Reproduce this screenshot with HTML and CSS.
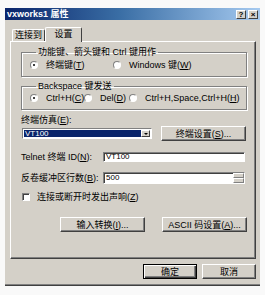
FILE: index.html
```html
<!DOCTYPE html>
<html lang="zh-CN">
<head>
  <meta charset="UTF-8">
  <title>vxworks1 属性</title>
  <link rel="stylesheet" href="styles.css">
</head>
<body>

  <div class="dialog">
    <div class="titlebar">
      <span class="title">vxworks1 属性</span>
      <span class="caption">
        <span class="cap-btn">?</span>
        <span class="cap-btn">×</span>
      </span>
    </div>

    <div class="body">
      <div class="tabs">
        <span class="tab">连接到</span>
        <span class="tab active">设置</span>
      </div>

      <div class="panel">
        <fieldset class="group first">
          <legend>功能键、箭头键和 Ctrl 键用作</legend>
          <div class="radios">
            <label class="radio w83"><span class="dot on"></span><span>终端键(<u>T</u>)</span></label>
            <label class="radio"><span class="dot"></span><span>Windows 键(<u>W</u>)</span></label>
          </div>
        </fieldset>

        <fieldset class="group second">
          <legend>Backspace 键发送</legend>
          <div class="radios">
            <label class="radio w54"><span class="dot on"></span><span>Ctrl+H(<u>C</u>)</span></label>
            <label class="radio w45"><span class="dot"></span><span>Del(<u>D</u>)</span></label>
            <label class="radio"><span class="dot"></span><span>Ctrl+H,Space,Ctrl+H(<u>H</u>)</span></label>
          </div>
        </fieldset>

        <div class="label-row">终端仿真(<u>E</u>):</div>
        <div class="combo-row">
          <div class="combo">
            <span class="combo-value">VT100</span>
            <span class="combo-arrow"></span>
          </div>
          <button class="btn wide">终端设置(<u>S</u>)...</button>
        </div>

        <div class="field-row telnet">
          <span class="field-label">Telnet 终端 ID(<u>N</u>):</span>
          <span class="field"><span>VT100</span></span>
        </div>

        <div class="field-row buffer">
          <span class="field-label">反卷缓冲区行数(<u>B</u>):</span>
          <span class="field tall"><span>500</span><span class="spin"><i></i><i></i></span></span>
        </div>

        <label class="check-row"><span class="box"></span><span>连接或断开时发出声响(<u>Z</u>)</span></label>

        <div class="btn-row">
          <button class="btn wide">输入转换(<u>I</u>)...</button>
          <button class="btn wide">ASCII 码设置(<u>A</u>)...</button>
        </div>
      </div>

      <div class="footer">
        <button class="btn small default">确定</button>
        <button class="btn small">取消</button>
      </div>
    </div>
  </div>

</body>
</html>
```

FILE: styles.css
```css
body {
  margin: 0;
  background: #f9f9f9;
  font-family: "Liberation Sans", "Noto Sans CJK SC", sans-serif;
  font-size: 9px;
  line-height: 10px;
  color: #000;
}
.dialog {
  margin: 8px 0 0 5px;
  width: 255px;
  height: 278px;
  box-sizing: border-box;
  background: #d4d0c8;
  border-bottom: 1px solid #404040;
  box-shadow: inset 0 -1px #808080;
}
.titlebar {
  height: 12px;
  display: flex;
  align-items: center;
  justify-content: space-between;
  padding: 0 2px 0 2px;
  background: linear-gradient(to right, #0a246a, #3a6ea5 45%, #a6caf0);
  color: #fff;
  font-weight: bold;
}
.caption {
  display: flex;
  gap: 2px;
}
.cap-btn {
  width: 10px;
  height: 9px;
  box-sizing: border-box;
  background: #d4d0c8;
  border: 1px solid;
  border-color: #fff #404040 #404040 #fff;
  color: #000;
  font-size: 8px;
  line-height: 7px;
  text-align: center;
}
.body {
  padding: 7px 4px 0 5px;
}
.tabs {
  display: flex;
  align-items: flex-end;
  height: 14px;
  padding-left: 2px;
}
.tab {
  width: 33px;
  height: 12px;
  box-sizing: border-box;
  border: 1px solid;
  border-bottom: none;
  border-color: #fff #404040 #404040 #fff;
  border-radius: 2px 2px 0 0;
  text-align: center;
  line-height: 11px;
  background: #d4d0c8;
}
.tab.active {
  width: 37px;
  height: 15px;
  margin-bottom: -1px;
  position: relative;
  z-index: 1;
  line-height: 12px;
}
.panel {
  height: 218px;
  box-sizing: border-box;
  border: 1px solid;
  border-color: #fff #404040 #404040 #fff;
  box-shadow: inset -1px -1px #808080;
  padding: 5px 8px 0 10px;
}
.group {
  margin: 0;
  border: 1px solid #808080;
  box-shadow: inset 1px 1px #fff, 1px 1px #fff;
  padding: 3px 0 6px 8px;
}
.group legend {
  padding: 0 2px;
  margin-left: 6px;
}
.group.second {
  margin-top: 4px;
  padding: 2px 0 6px 8px;
}
.radios {
  display: flex;
}
.radio {
  display: flex;
  align-items: center;
  gap: 8px;
  white-space: nowrap;
}
.w83 { width: 83px; }
.w54 { width: 54px; }
.w45 { width: 45px; }
.dot {
  width: 8px;
  height: 8px;
  flex: none;
  box-sizing: border-box;
  border-radius: 50%;
  border: 1px solid;
  border-color: #808080 #fff #fff #808080;
  background: #fff;
  display: flex;
  align-items: center;
  justify-content: center;
}
.dot.on::after {
  content: "";
  width: 2px;
  height: 2px;
  border-radius: 50%;
  background: #000;
}
.label-row {
  margin-top: 5px;
}
.combo-row {
  display: flex;
  align-items: center;
  margin-top: 1px;
  padding-left: 1px;
}
.combo {
  width: 130px;
  height: 11px;
  box-sizing: border-box;
  border: 1px solid;
  border-color: #808080 #fff #fff #808080;
  background: #fff;
  display: flex;
  padding: 1px;
}
.combo-value {
  flex: 1;
  background: #0a246a;
  color: #fff;
  line-height: 7px;
  font-size: 8px;
  padding-left: 1px;
}
.combo-arrow {
  width: 9px;
  box-sizing: border-box;
  background: #d4d0c8;
  border: 1px solid;
  border-color: #fff #404040 #404040 #fff;
  display: flex;
  align-items: center;
  justify-content: center;
}
.combo-arrow::after {
  content: "";
  border-left: 2px solid transparent;
  border-right: 2px solid transparent;
  border-top: 2px solid #000;
}
.btn {
  font: inherit;
  color: #000;
  background: #d4d0c8;
  border: 1px solid;
  border-color: #fff #404040 #404040 #fff;
  box-shadow: inset -1px -1px #808080;
  padding: 0;
  height: 15px;
  line-height: 12px;
}
.btn.wide {
  width: 85px;
}
.combo-row .btn {
  margin-left: 9px;
}
.field-row {
  display: flex;
  align-items: center;
  justify-content: space-between;
  padding-right: 2px;
}
.telnet {
  margin-top: 11px;
}
.buffer {
  margin-top: 10px;
}
.field {
  width: 142px;
  height: 10px;
  box-sizing: border-box;
  border: 1px solid;
  border-color: #808080 #fff #fff #808080;
  box-shadow: inset 1px 1px #404040;
  background: #fff;
  padding-left: 2px;
  font-size: 8px;
  line-height: 8px;
  display: flex;
  justify-content: space-between;
}
.field.tall {
  height: 12px;
  line-height: 10px;
}
.spin {
  width: 11px;
  display: flex;
  flex-direction: column;
  background: #d4d0c8;
}
.spin i {
  flex: 1;
  border: 1px solid;
  border-color: #fff #808080 #808080 #fff;
}
.check-row {
  display: flex;
  align-items: center;
  gap: 7px;
  margin-top: 8px;
  padding-left: 1px;
}
.box {
  width: 8px;
  height: 8px;
  box-sizing: border-box;
  border: 1px solid;
  border-color: #808080 #fff #fff #808080;
  box-shadow: inset 1px 1px #404040;
  background: #fff;
}
.btn-row {
  display: flex;
  justify-content: flex-end;
  gap: 17px;
  margin-top: 15px;
}
.footer {
  display: flex;
  justify-content: flex-end;
  gap: 5px;
  margin-top: 5px;
}
.btn.small {
  width: 54px;
}
.btn.default {
  border-color: #000;
  box-shadow: inset 1px 1px #fff, inset -1px -1px #404040, inset -2px -2px #808080;
}
```
